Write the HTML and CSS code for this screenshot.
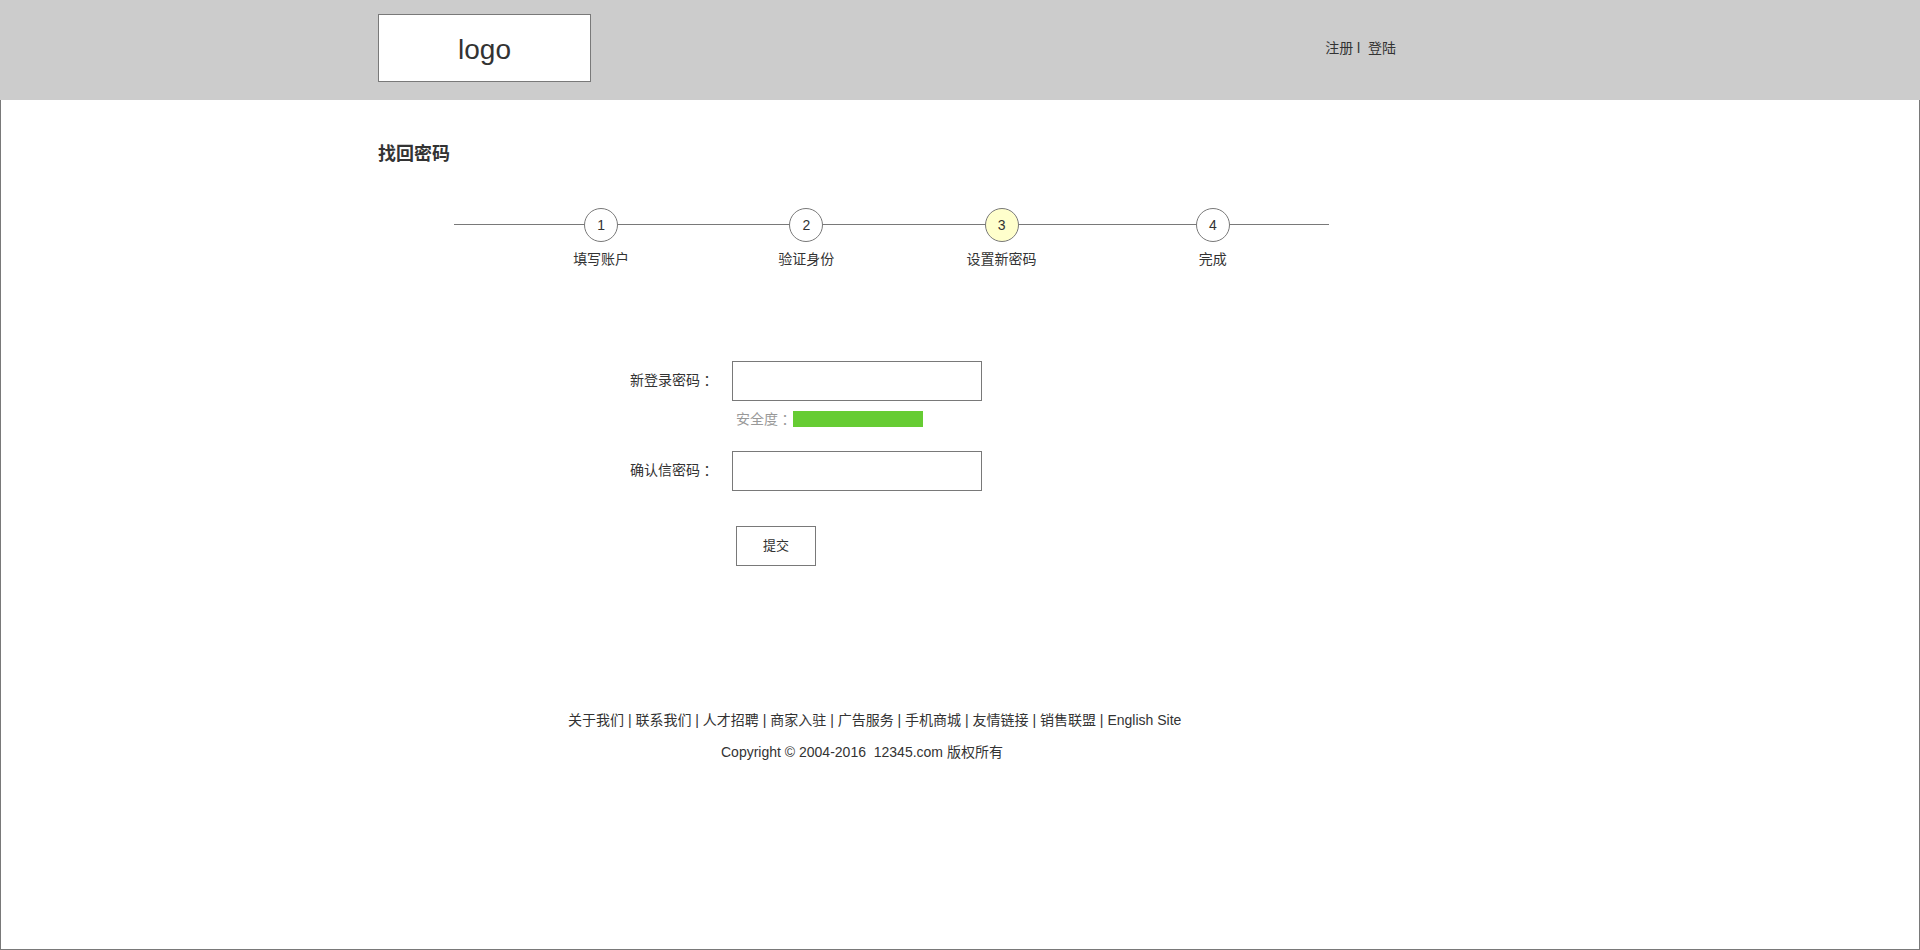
FILE: index.html
```html
<!DOCTYPE html>
<html lang="zh-CN">
<head>
<meta charset="utf-8">
<title>找回密码</title>
<link rel="stylesheet" href="styles.css">
</head>
<body>
<header class="header">
  <div class="container header-inner">
    <a class="logo" href="#">logo</a>
    <nav class="account"><a href="#">注册</a> l&nbsp; <a href="#">登陆</a></nav>
  </div>
</header>
<div class="page">
  <main class="container">
    <h1 class="title">找回密码</h1>
    <ol class="steps">
      <li class="step"><span class="step-number">1</span>填写账户</li>
      <li class="step"><span class="step-number">2</span>验证身份</li>
      <li class="step step-current" aria-current="step"><span class="step-number">3</span>设置新密码</li>
      <li class="step"><span class="step-number">4</span>完成</li>
    </ol>
    <form class="form">
      <label class="label" for="password">新登录密码<span class="colon">：</span></label>
      <input class="input" id="password" type="password">
      <div class="strength">安全度<span class="colon">：</span><span class="strength-bar"></span></div>
      <label class="label" for="confirm">确认信密码<span class="colon">：</span></label>
      <input class="input" id="confirm" type="password">
      <button class="submit" type="button">提交</button>
    </form>
  </main>
  <footer class="container footer">
    <nav class="footer-links"><a href="#">关于我们</a> | <a href="#">联系我们</a> | <a href="#">人才招聘</a> | <a href="#">商家入驻</a> | <a href="#">广告服务</a> | <a href="#">手机商城</a> | <a href="#">友情链接</a> | <a href="#">销售联盟</a> | <a href="#">English Site</a></nav>
    <p class="copyright">Copyright © 2004-2016&nbsp; 12345.com 版权所有</p>
  </footer>
</div>
</body>
</html>
```
FILE: styles.css
```css
* {
  box-sizing: border-box;
}

body {
  display: flex;
  flex-direction: column;
  min-height: 100vh;
  margin: 0;
  background: #fff;
  color: #333;
  font: 14px/20px "Liberation Sans", "Noto Sans CJK SC", sans-serif;
}

a {
  color: inherit;
  text-decoration: none;
}

.container {
  width: 100%;
  max-width: 1164px;
  margin: 0 auto;
}

.header {
  background: #ccc;
}

.header-inner {
  display: flex;
  justify-content: space-between;
  align-items: flex-start;
  padding: 14px 146px 18px 0;
}

.logo {
  width: 213px;
  padding: 19px 0 15px;
  border: 1px solid #797979;
  background: #fff;
  font-size: 28px;
  line-height: 32px;
  text-align: center;
}

.account {
  padding-top: 24px;
}

.page {
  flex: 1;
  border: 1px solid #797979;
  border-top: 0;
}

.title {
  margin: 0;
  padding-top: 42px;
  font-size: 18px;
  line-height: 24px;
}

.steps {
  position: relative;
  display: grid;
  grid-template-columns: 210fr 200fr 190fr 232fr;
  max-width: 875px;
  margin: 42px 0 0 76px;
  padding: 0 0 0 42px;
  list-style: none;
}

.steps::before {
  content: "";
  position: absolute;
  top: 16px;
  left: 0;
  right: 0;
  border-top: 1px solid #797979;
}

.step {
  display: flex;
  flex-direction: column;
  align-items: center;
  gap: 7px;
}

.step-number {
  z-index: 1;
  width: 34px;
  border: 1px solid #797979;
  border-radius: 50%;
  background: #fff;
  line-height: 32px;
  text-align: center;
}

.step-current .step-number {
  background: #ffc;
}

.form {
  display: grid;
  grid-template-columns: 102px 250px;
  align-items: center;
  margin: 92px 0 0 252px;
}

.label {
  display: flex;
  padding-bottom: 2px;
}

.colon {
  font-family: "Noto Sans CJK TC", sans-serif;
}

.input {
  width: 100%;
  height: 40px;
  padding: 0 8px;
  border: 1px solid #797979;
  background: #fff;
  color: inherit;
  font: inherit;
}

.strength {
  grid-column: 2;
  display: flex;
  align-items: center;
  padding: 8px 0 22px 4px;
  color: #999;
}

.strength-bar {
  width: 130px;
  height: 16px;
  margin-left: 1px;
  background: #6c3;
}

.submit {
  grid-column: 2;
  width: 80px;
  height: 40px;
  margin: 35px 0 0 4px;
  padding: 0;
  border: 1px solid #797979;
  background: #fff;
  color: inherit;
  font: inherit;
  font-size: 13px;
}

.footer {
  padding: 144px 0 24px 190px;
}

.copyright {
  margin: 12px 0 0 153px;
}
```
